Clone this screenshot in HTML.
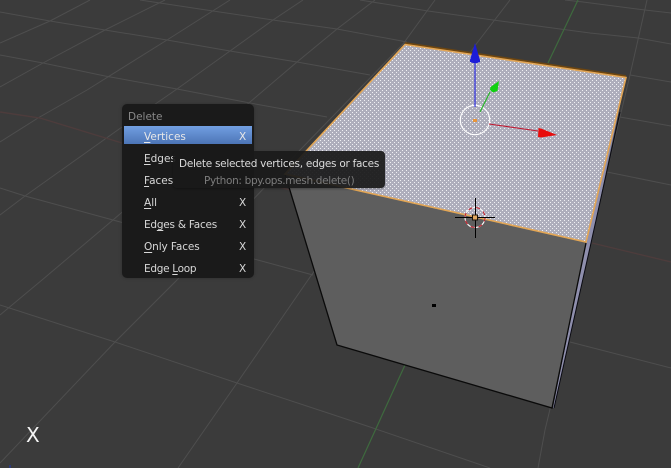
<!DOCTYPE html>
<html lang="en">
<head>
<meta charset="utf-8">
<title>Delete menu</title>
<style>
html,body{margin:0;padding:0;background:#3b3b3b}
#v{position:relative;width:671px;height:468px;overflow:hidden;background:#3b3b3b;font-family:"DejaVu Sans",sans-serif}
svg{position:absolute;left:0;top:0}
#menu{position:absolute;left:122px;top:104px;width:132px;height:174px;border-radius:5px;background:#1a1a1a;box-shadow:0 0 3px rgba(0,0,0,.25)}
#hl{position:absolute;left:124px;top:126px;width:128px;height:18px;background:linear-gradient(#729fe2,#4c75b6)}
.t{position:absolute;font-size:10.5px;line-height:14px;color:#d8d8d8;white-space:pre}
.t u{text-underline-offset:2px;text-decoration-thickness:1px}
#tip{position:absolute;left:173px;top:151px;width:212px;height:37px;border-radius:4px;background:rgba(26,26,26,.93);box-shadow:0 1px 2px rgba(0,0,0,.3)}
</style>
</head>
<body>
<div id="v">
<svg width="671" height="468" viewBox="0 0 671 468">
<defs>
<pattern id="st" width="4" height="4" patternUnits="userSpaceOnUse">
<rect width="4" height="4" fill="#aeaebc"/>
<rect x="0" y="0" width="1" height="1" fill="#f0f0f4"/>
<rect x="2" y="2" width="1" height="1" fill="#f0f0f4"/>
</pattern>
</defs>
<g fill="none" stroke="#4e4e4e" stroke-width="1">
<path d="M0 12L50 21L105 30L167 40L230 51L297 62L370 75"/>
<path d="M0 55L43 63L105 76L177 89L250 103L327 117"/>
<path d="M140 0L160 3L213 11L273 20L337 29L407 42"/>
<path d="M360 0L428 11L493 20L590 33L638 38L671 44"/>
<path d="M565 0L583 2L645 10L671 13"/>
<path d="M630 75L671 82"/>
<path d="M620 117L671 126"/>
<path d="M607 172L671 185"/>
<path d="M570 342L671 368"/>
<path d="M0 188L25 196L113 220L254 259L313 275"/>
<path d="M0 305L115 342L237 383L340 417L370 427L490 468"/>
<path d="M0 43L50 21L90 0"/>
<path d="M0 87L43 63L105 30L165 0"/>
<path d="M0 142L38 118L87 90L167 40L230 0"/>
<path d="M0 215L25 196L122 127L177 89L230 51L273 20L303 0"/>
<path d="M0 315L42 280L113 220L250 102L297 62L337 29L375 0"/>
<path d="M0 463L115 342L177 280L300 150L403 44L435 0"/>
<path d="M178 468L237 383L308 280L477 43L510 0"/>
<path d="M538 468L545 430L630 75L647 0"/>
</g>
<path d="M0 112L40 118L122 143L290 190" fill="none" stroke="#4d3c3c" stroke-width="1.4"/>
<path d="M592 243L671 262" fill="none" stroke="#4d3c3c" stroke-width="1.4"/>
<path d="M358 468L405 365M548 63L578 0" fill="none" stroke="#3e6a3e" stroke-width="1.2"/>
<rect x="9" y="465" width="2" height="3" fill="#2c3a7a"/>

<!-- side face sliver -->
<polygon points="626,77 591,243 554,408 553,408 586,243" fill="#8f8fad"/>
<path d="M620 112L591 243L554 408" fill="none" stroke="#0a0a12" stroke-width="1"/>

<!-- front face -->
<polygon points="285,174 586,242 552,408 337,345" fill="#5e5e5e"/>
<path d="M285 174L337 345L552 408L586 243" fill="none" stroke="#0a0a0a" stroke-width="1.3"/>

<!-- top face -->
<polygon points="405,44 626,77 586,242 285,174" fill="url(#st)"/>
<path d="M405 43L626 76" fill="none" stroke="#6e4610" stroke-width="1.8"/>
<path d="M405 44.5L626 77.5L586 242L285 174Z" fill="none" stroke="#e3a655" stroke-width="1.6"/>

<!-- center dot -->
<rect x="432" y="304" width="4" height="3" fill="#000"/>

<!-- transform gizmo -->
<circle cx="475" cy="120" r="14.7" fill="none" stroke="#fff" stroke-width="1.1"/>
<rect x="473" y="119" width="4" height="3" fill="#e8953a"/>
<path d="M475 62V107" stroke="#2020e0" stroke-width="1.1" fill="none"/>
<path d="M475 43L480 60L480 62L477 63H473L470 62L470 60Z" fill="#1c1cd8"/>
<path d="M480 112L490 92" stroke="#22b622" stroke-width="1.1" fill="none"/>
<path d="M499 81L497.5 91L493 92.5L490 90L490.5 87Z" fill="#10d010"/>
<path d="M489 124L538 131" stroke="#c01830" stroke-width="1.1" fill="none"/>
<path d="M557 135L541 137.5L538 137L538.5 128L541 128.5Z" fill="#e80c0c"/>

<!-- 3D cursor -->
<circle cx="475" cy="217.5" r="10" fill="none" stroke="#fff" stroke-width="1.1"/>
<circle cx="475" cy="217.5" r="10" fill="none" stroke="#c0202c" stroke-width="1.1" stroke-dasharray="4 4"/>
<path d="M455 217.5H495M475.5 198V238" stroke="#000" stroke-width="1" fill="none"/>
<rect x="472.5" y="215" width="5" height="5" fill="#e0a860" stroke="#1a1208" stroke-width="1"/>
</svg>

<div id="menu"></div>
<div id="hl"></div>
<div class="t" style="left:128px;top:110px;color:#8a8a8a">Delete</div>
<div class="t" style="left:144px;top:130px;color:#e8e8e8"><u>V</u>ertices</div>
<div class="t" style="left:239px;top:130px;color:#e8e8e8">X</div>
<div class="t" style="left:144px;top:152px"><u>E</u>dges</div>
<div class="t" style="left:144px;top:174px"><u>F</u>aces</div>
<div class="t" style="left:144px;top:196px"><u>A</u>ll</div>
<div class="t" style="left:239px;top:196px">X</div>
<div class="t" style="left:144px;top:218px;letter-spacing:-.23px">Ed<u>g</u>es &amp; Faces</div>
<div class="t" style="left:239px;top:218px">X</div>
<div class="t" style="left:144px;top:240px;letter-spacing:-.1px"><u>O</u>nly Faces</div>
<div class="t" style="left:239px;top:240px">X</div>
<div class="t" style="left:144px;top:262px;letter-spacing:-.3px">Edge <u>L</u>oop</div>
<div class="t" style="left:239px;top:262px">X</div>

<div id="tip"></div>
<div class="t" style="left:179px;top:157px;color:#dcdcdc;letter-spacing:-.27px">Delete selected vertices, edges or faces</div>
<div class="t" style="left:204px;top:174px;color:#7c7c7c;letter-spacing:-.33px">Python: bpy.ops.mesh.delete()</div>

<div class="t" style="left:26px;top:424px;font-size:20px;line-height:23px;color:#f4f4f4">X</div>
</div>
</body>
</html>
